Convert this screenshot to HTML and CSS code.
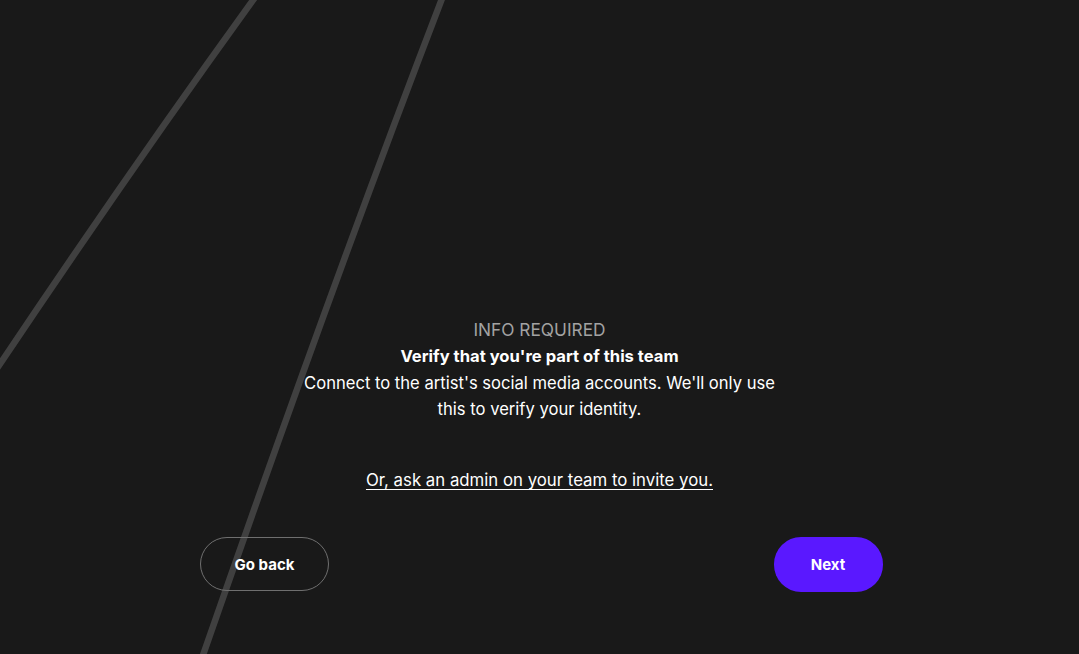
FILE: index.html
```html
<!DOCTYPE html>
<html lang="en">
<head>
<meta charset="utf-8">
<title>Verify</title>
<link rel="stylesheet" href="styles.css">
</head>
<body>
<svg class="bg-lines" width="1079" height="654" viewBox="0 0 1079 654" aria-hidden="true">
  <path d="M256 -4 Q130 170 -4 370" />
  <path d="M443 -4 Q330 290 202 658" />
</svg>
<main class="page">
  <section class="intro">
    <p class="eyebrow">INFO REQUIRED</p>
    <h1 class="title">Verify that you're part of this team</h1>
    <p class="desc">Connect to the artist's social media accounts. We'll only use this to verify your identity.</p>
    <a class="invite" href="#">Or, ask an admin on your team to invite you.</a>
  </section>
  <div class="actions">
    <button class="btn btn-back" type="button">Go back</button>
    <button class="btn btn-next" type="button">Next</button>
  </div>
</main>
</body>
</html>
```
FILE: styles.css
```css
html, body {
  margin: 0;
  padding: 0;
  background: #191919;
  height: 100%;
  overflow: hidden;
}
body {
  font-family: "Inter", "Liberation Sans", sans-serif;
  color: #fff;
  position: relative;
}
.bg-lines {
  position: absolute;
  left: 0;
  top: 0;
  fill: none;
  stroke: #404040;
  stroke-width: 6.5;
}
.page {
  position: relative;
  width: 686px;
  margin: 0 auto;
  padding-top: 317px;
  display: flex;
  flex-direction: column;
}
.intro {
  display: flex;
  flex-direction: column;
  align-items: center;
  text-align: center;
}
.eyebrow {
  margin: 0;
  font-size: 17.3px;
  line-height: 26px;
  color: #a3a3a3;
}
.title {
  margin: 0;
  font-size: 16.6px;
  line-height: 27px;
  font-weight: 700;
}
.desc {
  margin: 0;
  font-size: 16.6px;
  line-height: 26px;
  width: 490px;
}
.invite {
  margin-top: 45px;
  font-size: 16.8px;
  line-height: 26px;
  color: #fff;
  text-decoration: underline;
  text-underline-offset: 3px;
}
.actions {
  margin-top: 44px;
  display: flex;
  justify-content: space-between;
  padding: 0 0 0 3.5px;
}
.btn {
  height: 54px;
  border-radius: 27px;
  font-family: inherit;
  font-size: 15px;
  font-weight: 700;
  color: #fff;
  cursor: pointer;
}
.btn-back {
  width: 129px;
  background: transparent;
  border: 1px solid #6f6f6f;
}
.btn-next {
  width: 109px;
  height: 55px;
  background: #5a18ff;
  border: none;
}
```
